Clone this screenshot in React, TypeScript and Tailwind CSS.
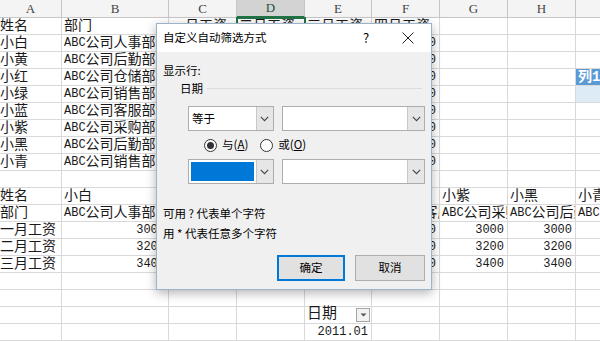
import React from "react";

type Cell = string | null;

const cols = ["A", "B", "C", "D", "E", "F", "G", "H", "I"];

const depts = [
  ["小白", "ABC公司人事部"],
  ["小黄", "ABC公司后勤部"],
  ["小红", "ABC公司仓储部"],
  ["小绿", "ABC公司销售部"],
  ["小蓝", "ABC公司客服部"],
  ["小紫", "ABC公司采购部"],
  ["小黑", "ABC公司后勤部"],
  ["小青", "ABC公司销售部"],
];

// rows 2..20 of the sheet, columns A..I
const rows: Cell[][] = [
  ["姓名", "部门", "一月工资", "二月工资", "三月工资", "四月工资", null, null, null],
  ...depts.map(([n, d]) => [n, d, "3000", "3200", "3400", "3000", null, null, null] as Cell[]),
  [null, null, null, null, null, null, null, null, null],
  ["姓名", ...depts.map((d) => d[0])],
  ["部门", ...depts.map((d) => d[1])],
  ["一月工资", ...depts.map(() => "3000")],
  ["二月工资", ...depts.map(() => "3200")],
  ["三月工资", ...depts.map(() => "3400")],
  [null, null, null, null, null, null, null, null, null],
  [null, null, null, null, null, null, null, null, null],
  [null, null, null, null, "日期", null, null, null, null],
  [null, null, null, null, "2011.01", null, null, null, null],
];

// cells C..E of rows 3..17 sit fully under the dialog
const hidden = (r: number, c: number) => r >= 1 && r <= 15 && c >= 2 && c <= 4;

function Txt({ v }: { v: string }) {
  const parts = v.split(/([\x20-\x7e]+)/).filter(Boolean);
  return (
    <>
      {parts.map((p, i) =>
        /^[\x20-\x7e]+$/.test(p) ? (
          <span key={i} className="text-[12px]">
            {p}
          </span>
        ) : (
          <span key={i}>{p}</span>
        )
      )}
    </>
  );
}

function SheetCell({ v, r, c }: { v: Cell; r: number; c: number }) {
  const num = v !== null && /^[\d.]+$/.test(v);
  let extra = "";
  if (r === 3 && c === 8) extra = "bg-[#5b9bd5] text-white font-bold";
  if (r === 4 && c === 8) extra = "bg-[#ddebf7]";
  if (r === 0 && c === 3) extra = "outline-2 outline-[#217346] -outline-offset-1 z-10";

  if (v === "日期") {
    return (
      <div className="flex items-center justify-between border-r border-b border-[#d9d9d9] pl-[2px] pr-[1px] text-[15px]">
        <span>日期</span>
        <span className="flex h-[14px] w-[14px] items-center justify-center border border-[#a6a6a6] bg-[#f2f2f2]">
          <svg width="7" height="4" viewBox="0 0 7 4">
            <path d="M0.5 0.5 L3.5 3.5 L6.5 0.5 Z" fill="#555" />
          </svg>
        </span>
      </div>
    );
  }

  const show = v !== null && !hidden(r, c);

  return (
    <div
      className={`flex items-center overflow-hidden whitespace-nowrap border-r border-b border-[#d9d9d9] leading-none ${
        num ? "justify-end pr-[3px]" : c === 0 ? "pl-0" : "pl-[2px]"
      } ${extra}`}
    >
      {r === 3 && c === 8 ? <span>列1</span> : show ? <Txt v={v as string} /> : null}
    </div>
  );
}

function Chevron() {
  return (
    <svg width="9" height="6" viewBox="0 0 9 6">
      <path d="M0.8 0.8 L4.5 4.6 L8.2 0.8" fill="none" stroke="#444" strokeWidth="1.1" />
    </svg>
  );
}

function Combo({ className, text, fill }: { className: string; text?: string; fill?: boolean }) {
  return (
    <div className={`flex h-[25px] border border-[#abadb3] bg-white ${className}`}>
      <div className="flex flex-1 items-center p-[2px]">
        {fill ? (
          <div className="h-full w-full bg-[#0078d7]" />
        ) : (
          <span className="pl-[1px]">{text}</span>
        )}
      </div>
      <div className="flex w-[17px] items-center justify-center border-l border-[#c8c8c8] bg-[#e6e6e6]">
        <Chevron />
      </div>
    </div>
  );
}

function Radio({ checked }: { checked?: boolean }) {
  return (
    <span className="flex h-[13px] w-[13px] items-center justify-center rounded-full border border-[#333] bg-white">
      {checked && <span className="h-[7px] w-[7px] rounded-full bg-[#333]" />}
    </span>
  );
}

function FilterDialog() {
  return (
    <div className="absolute left-[156px] top-[23px] z-20 flex h-[267px] w-[276px] flex-col border border-[#9cb3ca] bg-[#f0f0f0] font-['Noto_Sans_CJK_SC',sans-serif] text-[11.5px] text-black shadow-[0_3px_10px_rgba(0,0,0,0.3)]">
      <div className="flex h-[28px] items-center bg-white pl-[6px] pr-[17px]">
        <span className="flex-1">自定义自动筛选方式</span>
        <span className="w-[12px] text-center text-[13px]">?</span>
        <svg className="ml-[30px]" width="12" height="12" viewBox="0 0 12 12">
          <path d="M0.5 0.5 L11.5 11.5 M11.5 0.5 L0.5 11.5" stroke="#222" strokeWidth="1" />
        </svg>
      </div>
      <div className="flex flex-col px-[6px]">
        <span className="mt-[10px] leading-[16px]">显示行:</span>
        <div className="mt-[2px] flex items-center pl-[17px]">
          <span className="leading-[16px]">日期</span>
          <div className="ml-[4px] mr-[3px] h-px flex-1 bg-[#dcdcdc]" />
        </div>
        <div className="mt-[10px] flex gap-[8px] pl-[25px]">
          <Combo className="w-[86px]" text="等于" />
          <Combo className="w-[144px]" />
        </div>
        <div className="mt-[7px] flex h-[14px] items-center pl-[41px]">
          <Radio checked />
          <span className="ml-[5px]">
            与(<u>A</u>)
          </span>
          <span className="ml-[12px]">
            <Radio />
          </span>
          <span className="ml-[5px]">
            或(<u>O</u>)
          </span>
        </div>
        <div className="mt-[7px] flex gap-[8px] pl-[25px]">
          <Combo className="w-[86px]" fill />
          <Combo className="w-[144px]" />
        </div>
        <span className="mt-[21px] leading-[16px]">可用 ? 代表单个字符</span>
        <span className="mt-[4px] leading-[16px]">用 * 代表任意多个字符</span>
        <div className="mt-[14px] flex justify-end gap-[10px]">
          <button className="h-[26px] w-[68px] border-2 border-[#0078d7] bg-[#e1e1e1]">确定</button>
          <button className="h-[26px] w-[70px] border border-[#adadad] bg-[#e1e1e1]">取消</button>
        </div>
      </div>
    </div>
  );
}

export default function App() {
  return (
    <div className="relative h-[341px] w-[600px] overflow-hidden bg-white font-['Liberation_Mono','Noto_Sans_CJK_SC',monospace] text-[14px] text-[#1a1a1a]">
      <div className="grid w-[644px] grid-cols-[62px_107px_68px_68px_67px_68px_68px_68px_68px] grid-rows-[18px_repeat(19,17px)]">
        {cols.map((c) => (
          <div
            key={c}
            className={`flex items-center justify-center border-r border-b font-['Liberation_Serif',serif] text-[13px] ${
              c === "D"
                ? "border-b-2 border-r-[#c6c6c6] border-b-[#217346] bg-[#d3d3d3] text-[#1e4e34]"
                : "border-[#c6c6c6] bg-[#f4f4f4] text-[#444]"
            }`}
          >
            {c}
          </div>
        ))}
        {rows.map((row, r) =>
          cols.map((_, c) => <SheetCell key={`${r}-${c}`} v={row[c] ?? null} r={r} c={c} />)
        )}
      </div>
      <FilterDialog />
    </div>
  );
}
